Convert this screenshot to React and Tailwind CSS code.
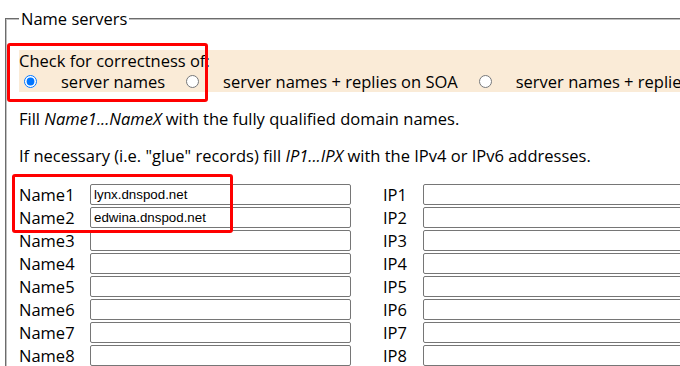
const names = [
  { n: "Name1", ip: "IP1", v: "lynx.dnspod.net" },
  { n: "Name2", ip: "IP2", v: "edwina.dnspod.net" },
  { n: "Name3", ip: "IP3", v: "" },
  { n: "Name4", ip: "IP4", v: "" },
  { n: "Name5", ip: "IP5", v: "" },
  { n: "Name6", ip: "IP6", v: "" },
  { n: "Name7", ip: "IP7", v: "" },
  { n: "Name8", ip: "IP8", v: "" },
];

function Field({ value }) {
  return (
    <input
      type="text"
      defaultValue={value}
      className="h-[21px] w-[261px] shrink-0 rounded-[2px] border border-[#767676] bg-white px-[3px] text-[13.33px] text-black outline-none [font-family:'Liberation_Sans',Arial,sans-serif]"
    />
  );
}

export default function App() {
  return (
    <div className="relative h-[366px] w-[680px] overflow-hidden bg-white text-[16.5px] leading-[21px] text-black [font-family:'Open_Sans','Noto_Sans',sans-serif]">
      <fieldset className="mt-[8px] ml-[5px] w-[720px] border-2 border-[#c0c0c0] px-[12px] [border-style:groove]">
        <legend className="px-[2px]">Name servers</legend>

        <div className="mt-[21px] bg-[#faebd7]">
          <div>Check for correctness of:</div>
          <div className="flex items-center whitespace-nowrap">
            <input type="radio" name="check" defaultChecked className="ml-[5px] mr-[24px] h-[13px] w-[13px]" />
            <span>server names</span>
            <input type="radio" name="check" className="ml-[21px] mr-[24px] h-[13px] w-[13px]" />
            <span>server names + replies on SOA</span>
            <input type="radio" name="check" className="ml-[21px] mr-[24px] h-[13px] w-[13px]" />
            <span>server names + replies on SOA + data</span>
          </div>
        </div>

        <p className="mt-[16px]">
          Fill <i>Name1...NameX</i> with the fully qualified domain names.
        </p>
        <p className="mt-[16px] whitespace-nowrap">
          If necessary (i.e. "glue" records) fill <i>IP1...IPX</i> with the IPv4 or IPv6 addresses.
        </p>

        <div className="mt-[18px] flex flex-col gap-[2px]">
          {names.map((r) => (
            <div key={r.n} className="flex items-center">
              <span className="w-[71px] shrink-0">{r.n}</span>
              <Field value={r.v} />
              <span className="ml-[32px] w-[40px] shrink-0">{r.ip}</span>
              <Field value="" />
            </div>
          ))}
        </div>
      </fieldset>

      <div className="pointer-events-none absolute left-[7px] top-[43px] h-[59px] w-[201px] rounded-[3px] border-[3px] border-[#f00]" />
      <div className="pointer-events-none absolute left-[12px] top-[174px] h-[59px] w-[221px] rounded-[3px] border-[3px] border-[#f00]" />
    </div>
  );
}
